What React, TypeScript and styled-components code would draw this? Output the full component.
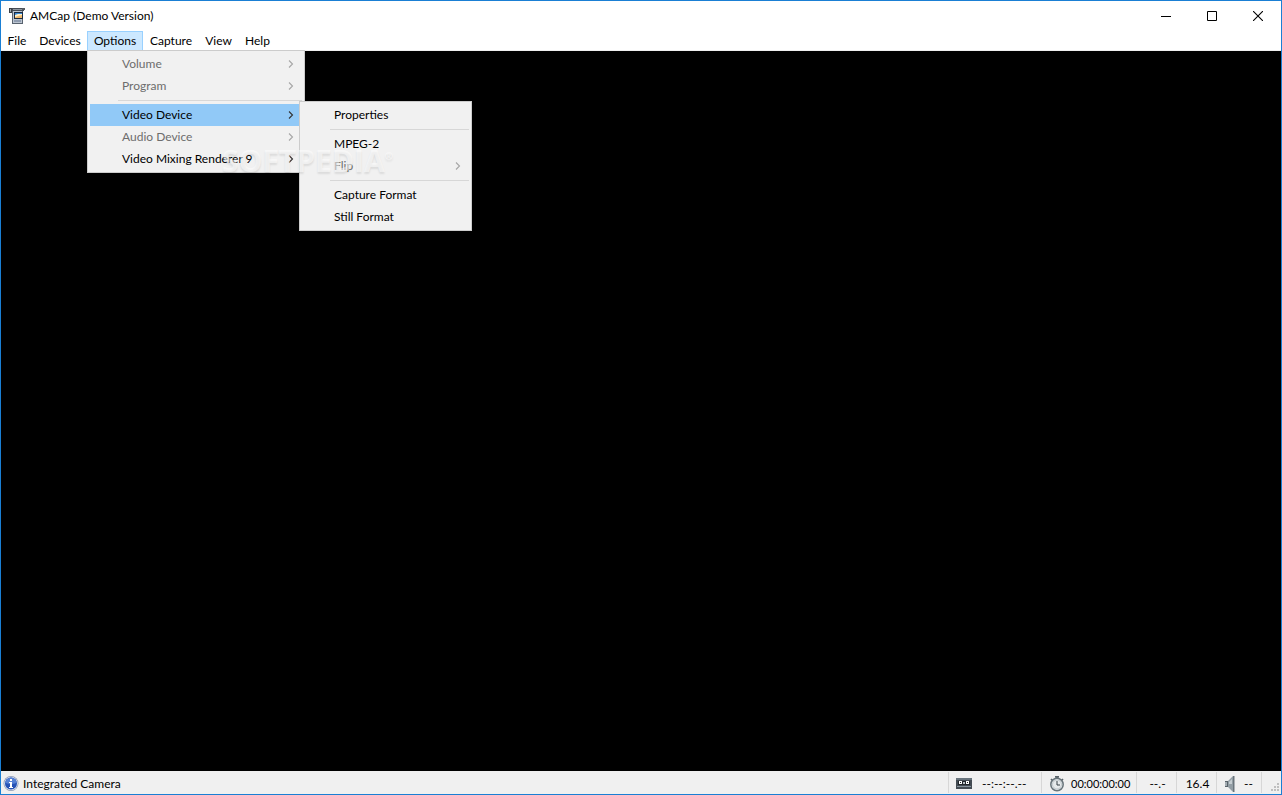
import React from "react";
import styled, { createGlobalStyle, css } from "styled-components";

const GlobalStyle = createGlobalStyle`
  * { box-sizing: border-box; }
  body { margin: 0; background: #000; }
  body, button { font-family: Lato, "Open Sans", sans-serif; font-size: 12px; line-height: 16px; color: #000; }
`;

const Window = styled.div`
  display: flex;
  flex-direction: column;
  min-height: 100vh;
  border: 1px solid #1a7fd4;
`;

const TitleBar = styled.header`
  display: flex;
  align-items: center;
  height: 30px;
  padding-left: 8px;
  background: #fff;
`;

const Title = styled.h1`
  flex: 1;
  margin: 0 0 0 5px;
  font: inherit;
`;

const WindowButton = styled.button`
  display: grid;
  place-items: center;
  width: 46px;
  height: 28px;
  padding: 0;
  border: 0;
  background: transparent;
`;

const MenuBar = styled.nav`
  display: flex;
  height: 20px;
  background: #fff;
  border-bottom: 1px solid #f0f0f0;
`;

const MenuSlot = styled.div<{ $width: number }>`
  position: relative;
  width: ${(p) => p.$width}px;
`;

const MenuButton = styled.button<{ $open?: boolean }>`
  width: 100%;
  height: 20px;
  padding: 0;
  border: 1px solid ${(p) => (p.$open ? "#99d1ff" : "transparent")};
  background: ${(p) => (p.$open ? "#cce8ff" : "transparent")};
  white-space: nowrap;
`;

const popup = css`
  position: absolute;
  margin: 0;
  padding: 2px;
  list-style: none;
  border: 1px solid #ccc;
  background: #f1f1f1;
`;

const Popup = styled.ul`
  ${popup}
  top: 19px;
  left: 0;
  width: 218px;
  z-index: 1;
`;

const SubPopup = styled.ul`
  ${popup}
  top: -3px;
  left: 209px;
  width: 173px;
`;

const Entry = styled.li`
  position: relative;
`;

const EntryButton = styled.button<{ $active?: boolean }>`
  display: flex;
  align-items: center;
  justify-content: space-between;
  width: 100%;
  height: 22px;
  padding: 0 8px 0 32px;
  border: 0;
  background: ${(p) => (p.$active ? "#91c9f7" : "transparent")};
  white-space: nowrap;
  &:disabled { color: #6d6d6d; }
  svg { color: #333; }
  &:disabled svg { color: #a6a6a6; }
`;

const Separator = styled.li`
  height: 1px;
  margin: 3px 0 3px 28px;
  background: #d7d7d7;
`;

const Watermark = styled.li`
  position: absolute;
  top: 92px;
  left: 134px;
  font-family: "Open Sans", sans-serif;
  font-size: 30px;
  line-height: 36px;
  font-weight: 700;
  color: rgba(255, 255, 255, 0.55);
  text-shadow: 0 2px 2px rgba(0, 0, 0, 0.09);
  pointer-events: none;
  sup { font-size: 10px; line-height: 10px; vertical-align: 12px; }
`;

const Preview = styled.main`
  flex: 1;
  background: #000;
`;

const StatusBar = styled.footer`
  display: flex;
  align-items: center;
  height: 23px;
  background: #f0f0f0;
`;

const Device = styled.div`
  display: flex;
  flex: 1;
  align-items: center;
  gap: 4px;
  padding: 2px 0 0 2px;
`;

const Pane = styled.div<{ $width: number; $gap?: number; $small?: boolean }>`
  display: flex;
  align-items: center;
  justify-content: ${(p) => (p.$gap ? "flex-start" : "center")};
  gap: ${(p) => p.$gap ?? 0}px;
  width: ${(p) => p.$width}px;
  height: 21px;
  padding: 2px 0 0 ${(p) => (p.$gap ? 7 : 2)}px;
  font-size: ${(p) => (p.$small ? 11 : 12)}px;
  border-left: 1px solid #d7d7d7;
  white-space: nowrap;
`;

const Grip = styled.div`
  display: flex;
  align-items: flex-end;
  justify-content: flex-end;
  width: 20px;
  height: 21px;
  border-left: 1px solid #d7d7d7;
`;

const Chevron = () => (
  <svg width="6" height="9" viewBox="0 0 6 9" fill="none" stroke="currentColor" strokeWidth="1.1" aria-hidden="true">
    <path d="M1 .5l3.5 3.5L1 7.5" />
  </svg>
);

const AppIcon = () => (
  <svg width="16" height="18" viewBox="0 0 16 18" aria-hidden="true">
    <path d="M0 1h3v5H0z" fill="#3c4148" />
    <path d="M1 2h1v3H1z" fill="#9da4ac" />
    <path d="M3 1h12v3H3z" fill="#454c55" />
    <path d="M4 2h9v1H4z" fill="#8d959e" />
    <path d="M13 1h3v2h-3z" fill="#555b62" />
    <path d="M3 4h11v13H3z" fill="#59636f" />
    <path d="M4 4h9v12H4z" fill="#bcc5d1" />
    <path d="M5 5h9v7H5z" fill="#1d2c40" />
    <path d="M6 6h7v5H6z" fill="#3b88d2" />
    <path d="M6 9l3-1 4-1v4H6z" fill="#f0b86b" />
    <path d="M6 8l3-1h4v1L9 9 6 10z" fill="#fff2cc" />
    <path d="M5 13h7v2H5z" fill="#8f9cb0" />
  </svg>
);

const InfoIcon = () => (
  <svg width="16" height="16" viewBox="0 0 16 16" aria-hidden="true">
    <circle cx="8" cy="7.5" r="7.5" fill="#8c98b3" />
    <circle cx="8" cy="7.5" r="6.8" fill="#dbe2f0" />
    <circle cx="8" cy="7.5" r="6" fill="#2552b6" />
    <path d="M2.5 7a5.5 5.5 0 0 1 11 0q-5.5 2-11 0" fill="#5580d4" />
    <path d="M7 3h2v2H7zM6 6h3v5h1v1H6v-1h1V7H6z" fill="#fff" />
  </svg>
);

const TapeIcon = () => (
  <svg width="16" height="12" viewBox="0 0 16 12" aria-hidden="true">
    <path d="M0 0h16v11H0z" fill="#434b52" />
    <path d="M0 0h16v2H0z" fill="#68747d" />
    <path d="M2 3h12v4H2z" fill="#22272b" />
    <path d="M3 3h3v3H3zM10 3h3v3h-3z" fill="#fff" />
    <path d="M4 4h1v1H4zM11 4h1v1h-1z" fill="#222" />
    <path d="M7 4h2v2H7z" fill="#b7bec4" />
    <path d="M1 8h14v1H1z" fill="#87939c" />
  </svg>
);

const TimerIcon = () => (
  <svg width="16" height="16" viewBox="0 0 16 16" fill="none" aria-hidden="true">
    <path d="M6 .8h4M8 1v2M2 3l2 2M14 3l-2 2" stroke="#59636a" strokeWidth="1.7" />
    <circle cx="8" cy="8.5" r="6.2" fill="#e6eaec" stroke="#68747b" strokeWidth="1.5" />
    <circle cx="8" cy="8.5" r="4.5" stroke="#b4bdc2" strokeWidth="0.8" />
    <path d="M8 5v4h3" stroke="#343e44" />
  </svg>
);

const SpeakerIcon = () => (
  <svg width="12" height="16" viewBox="0 0 12 16" aria-hidden="true">
    <path d="M1 5h4v6H1z" fill="#59636a" />
    <path d="M1 6h2v4H1z" fill="#a4adb3" />
    <path d="M4 5l5-5v16l-5-5z" fill="#939ea5" />
    <path d="M9 0h1.5v16H9z" fill="#6a757c" />
    <path d="M5 6l3-3v5H5z" fill="#c5cdd1" />
  </svg>
);

const GripIcon = () => (
  <svg width="10" height="10" viewBox="0 0 10 10" fill="#bfbfbf" aria-hidden="true">
    <path d="M6 0h2v2H6zM3 3h2v2H3zM6 3h2v2H6zM0 6h2v2H0zM3 6h2v2H3zM6 6h2v2H6z" />
  </svg>
);

type ItemProps = { label: string; arrow?: boolean; disabled?: boolean; active?: boolean; children?: React.ReactNode };

const Item = ({ label, arrow, disabled, active, children }: ItemProps) => (
  <Entry>
    <EntryButton disabled={disabled} $active={active}>
      {label}
      {arrow && <Chevron />}
    </EntryButton>
    {children}
  </Entry>
);

const OptionsMenu = () => (
  <Popup>
    <Item label="Volume" arrow disabled />
    <Item label="Program" arrow disabled />
    <Separator />
    <Item label="Video Device" arrow active>
      <SubPopup>
        <Item label="Properties" />
        <Separator />
        <Item label="MPEG-2" />
        <Item label="Flip" arrow disabled />
        <Separator />
        <Item label="Capture Format" />
        <Item label="Still Format" />
      </SubPopup>
    </Item>
    <Item label="Audio Device" arrow disabled />
    <Item label="Video Mixing Renderer 9" arrow />
    <Watermark>SOFTPEDIA<sup>®</sup></Watermark>
  </Popup>
);

const menus = [
  { label: "File", width: 32 },
  { label: "Devices", width: 54 },
  { label: "Options", width: 56, open: true },
  { label: "Capture", width: 56 },
  { label: "View", width: 39 },
  { label: "Help", width: 39 },
];

export default function App() {
  return (
    <Window>
      <GlobalStyle />
      <TitleBar>
        <AppIcon />
        <Title>AMCap (Demo Version)</Title>
        <WindowButton aria-label="Minimize">
          <svg width="10" height="10"><path d="M0 5h10v1H0z" /></svg>
        </WindowButton>
        <WindowButton aria-label="Maximize">
          <svg width="10" height="10"><path d="M.5.5h9v9h-9z" fill="none" stroke="#000" /></svg>
        </WindowButton>
        <WindowButton aria-label="Close">
          <svg width="10" height="10"><path d="M0 0l10 10M10 0L0 10" stroke="#000" strokeWidth="1.1" /></svg>
        </WindowButton>
      </TitleBar>
      <MenuBar>
        {menus.map((m) => (
          <MenuSlot key={m.label} $width={m.width}>
            <MenuButton $open={m.open}>{m.label}</MenuButton>
            {m.open && <OptionsMenu />}
          </MenuSlot>
        ))}
      </MenuBar>
      <Preview />
      <StatusBar>
        <Device><InfoIcon />Integrated Camera</Device>
        <Pane $width={93} $gap={10}><TapeIcon />--:--:--.--</Pane>
        <Pane $width={95} $gap={6} $small><TimerIcon />00:00:00:00</Pane>
        <Pane $width={40}>--.-</Pane>
        <Pane $width={40}>16.4</Pane>
        <Pane $width={45} $gap={8}><SpeakerIcon />--</Pane>
        <Grip><GripIcon /></Grip>
      </StatusBar>
    </Window>
  );
}
